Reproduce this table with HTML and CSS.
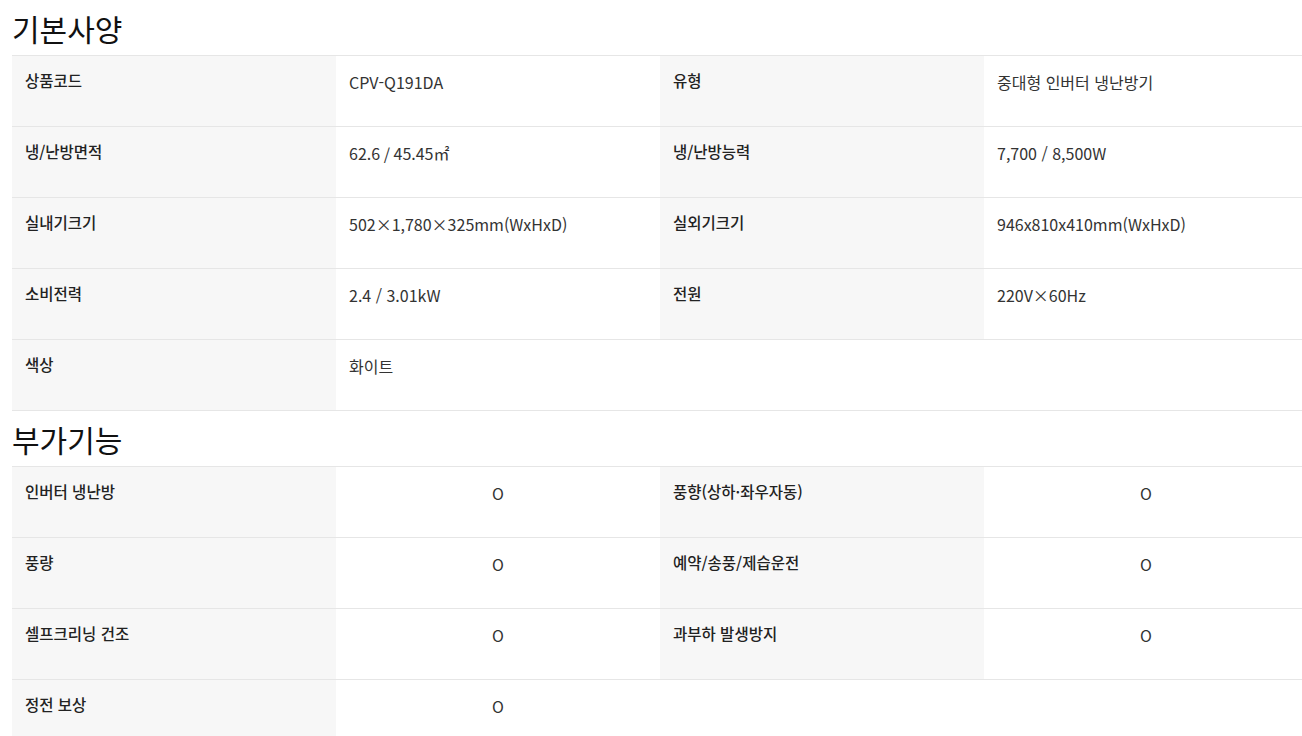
FILE: index.html
```html
<!DOCTYPE html>
<html lang="ko">
<head>
<meta charset="utf-8">
<title>기본사양</title>
<link rel="stylesheet" href="styles.css">
</head>
<body>
<div class="page">
  <h2 class="sec-title">기본사양</h2>
  <table class="spec">
    <colgroup><col class="c1"><col class="c2"><col class="c3"><col class="c4"></colgroup>
    <tr><th>상품코드</th><td>CPV-Q191DA</td><th>유형</th><td>중대형 인버터 냉난방기</td></tr>
    <tr><th>냉/난방면적</th><td>62.6 / 45.45㎡</td><th>냉/난방능력</th><td>7,700 / 8,500W</td></tr>
    <tr><th>실내기크기</th><td>502×1,780×325mm(WxHxD)</td><th>실외기크기</th><td>946x810x410mm(WxHxD)</td></tr>
    <tr><th>소비전력</th><td>2.4 / 3.01kW</td><th>전원</th><td>220V×60Hz</td></tr>
    <tr><th>색상</th><td>화이트</td><td class="empty"></td><td class="empty"></td></tr>
  </table>
  <h2 class="sec-title">부가기능</h2>
  <table class="spec feat">
    <colgroup><col class="c1"><col class="c2"><col class="c3"><col class="c4"></colgroup>
    <tr><th>인버터 냉난방</th><td>O</td><th>풍향(상하·좌우자동)</th><td>O</td></tr>
    <tr><th>풍량</th><td>O</td><th>예약/송풍/제습운전</th><td>O</td></tr>
    <tr><th>셀프크리닝 건조</th><td>O</td><th>과부하 발생방지</th><td>O</td></tr>
    <tr><th>정전 보상</th><td>O</td><td class="empty"></td><td class="empty"></td></tr>
  </table>
</div>
</body>
</html>
```

FILE: styles.css
```css
html, body {
  margin: 0;
  padding: 0;
  background: #fff;
  overflow: hidden;
}
body {
  font-family: "Noto Sans CJK KR", "Noto Sans KR", "Noto Sans", sans-serif;
  color: #222;
}
.page {
  padding-left: 12px;
}
.sec-title {
  margin: 0;
  height: 55px;
  line-height: 57px;
  font-size: 30px;
  font-weight: 400;
  color: #111;
  letter-spacing: 0;
  overflow: hidden;
}
.spec {
  border-collapse: collapse;
  table-layout: fixed;
  width: 1296px;
}
.spec .c1, .spec .c2, .spec .c3, .spec .c4 { width: 324px; }
.spec tr {
  border-top: 1px solid #e6e6e6;
  border-bottom: 1px solid #e6e6e6;
}
.spec th, .spec td {
  height: 71px;
  box-sizing: border-box;
  vertical-align: top;
  text-align: left;
  line-height: 22px;
}
.spec th {
  background: #f7f7f7;
  font-size: 15.5px;
  font-weight: 500;
  color: #222;
  padding: 13px 13px 0;
}
.spec td {
  background: #fff;
  font-size: 16px;
  font-weight: 400;
  color: #333;
  padding: 15px 13px 0;
}
.feat td {
  text-align: center;
  padding-top: 15px;
}
```
